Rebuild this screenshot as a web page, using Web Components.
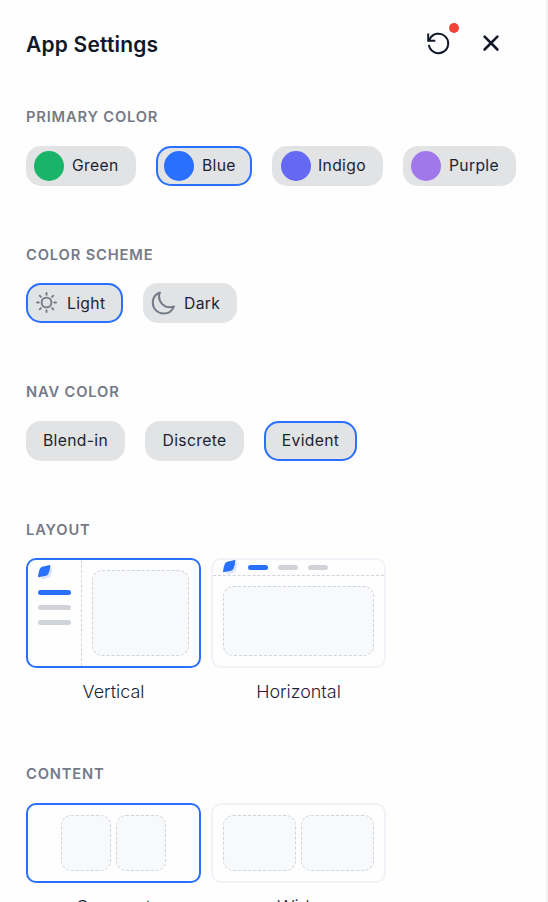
<!DOCTYPE html>
<html lang="en">
<head>
<meta charset="utf-8">
<title>App Settings</title>
<style>
html,body{margin:0;height:902px;overflow:hidden;background:#fefefe}
body{font-family:Inter,"Liberation Sans",sans-serif;color:#1b2333}
</style>
</head>
<body>
<settings-panel>
  <settings-header slot="header">App Settings</settings-header>
  <settings-section heading="Primary color" style="--h:137px;--hls:.82px">
    <option-pill dot="#19b467" style="--w:110px">Green</option-pill>
    <option-pill dot="#2970ff" selected style="--w:96px">Blue</option-pill>
    <option-pill dot="#6468f3" style="--w:111px;--nudge:1px;--gap-i:7px">Indigo</option-pill>
    <option-pill dot="#a078ec" style="--w:113px">Purple</option-pill>
  </settings-section>
  <settings-section heading="Color scheme" style="--h:138px;--top:1px;--lift:2px">
    <option-pill icon="sun" selected style="--w:97px">Light</option-pill>
    <option-pill icon="moon" style="--w:94px">Dark</option-pill>
  </settings-section>
  <settings-section heading="Nav color" style="--h:137px">
    <option-pill style="--w:99px">Blend-in</option-pill>
    <option-pill style="--w:99px">Discrete</option-pill>
    <option-pill selected style="--w:93px">Evident</option-pill>
  </settings-section>
  <settings-section heading="Layout" style="--h:245px;--gap:10px;--top:1px">
    <layout-card kind="vertical" selected>Vertical</layout-card>
    <layout-card kind="horizontal">Horizontal</layout-card>
  </settings-section>
  <settings-section heading="Content" style="--h:160px;--gap:10px">
    <layout-card kind="compact" selected>Compact</layout-card>
    <layout-card kind="wide">Wide</layout-card>
  </settings-section>
</settings-panel>
<script>
class Base extends HTMLElement {
  connectedCallback() {
    if (!this.shadowRoot) this.attachShadow({ mode: 'open' }).innerHTML = this.render();
  }
}

customElements.define('settings-panel', class extends Base {
  render() {
    return `<style>
      :host{display:block;box-sizing:border-box;height:902px;overflow:hidden;padding:0 0 0 26px;border-right:2px solid #f2f2f2}
    </style><slot name="header"></slot><slot></slot>`;
  }
});

customElements.define('settings-header', class extends Base {
  render() {
    return `<style>
      :host{display:flex;align-items:center;height:107px;box-sizing:border-box;padding:0 43px 21px 0}
      h1{margin:3px auto 0 0;font-size:21px;line-height:28px;font-weight:600;letter-spacing:.19px;color:#101828}
      .actions{display:flex;gap:29px}
      .reset{position:relative;display:flex}
      .reset i{position:absolute;left:23px;top:-8px;width:10px;height:10px;border-radius:50%;background:#f04438}
      svg{display:block;fill:none;stroke:#101828}
      .x{stroke-linecap:round}
    </style>
    <h1><slot></slot></h1>
    <div class="actions">
      <span class="reset"><svg width="24" height="24" viewBox="0 0 24 24" stroke-width="2"><path d="M2.9 13.8A9.7 9.7 0 1 0 3.7 8.3L2.6 9.6M2.2 2.5V9.8H9.3"/></svg><i></i></span>
      <svg class="x" width="24" height="24" viewBox="0 0 24 24" stroke-width="2.6"><path d="M5.6 5.7L18.4 18.5M18.4 5.7L5.6 18.5"/></svg>
    </div>`;
  }
});

customElements.define('settings-section', class extends Base {
  render() {
    return `<style>
      :host{display:block;height:var(--h)}
      h2{margin:0;padding-top:var(--top,0px);height:39px;box-sizing:border-box;font-size:14.7px;line-height:20px;font-weight:600;letter-spacing:var(--hls,.85px);text-transform:uppercase;color:#747a87}
      .row{display:flex;gap:var(--gap,20px)}
    </style><h2>${this.getAttribute('heading')}</h2><div class="row"><slot></slot></div>`;
  }
});

const ICONS = {
  sun: `<svg style="margin:0 10px 0 10px" width="21" height="22" viewBox="0 0 21 22" stroke-width="1.9"><circle cx="10.5" cy="10.5" r="4.9"/><path d="M10.5 1V2.8M10.5 18.2V20M1 10.5H2.8M18.2 10.5H20M3.7 3.7L4.9 4.9M16.1 16.1L17.3 17.3M3.7 17.3L4.9 16.1M16.1 4.9L17.3 3.7"/></svg>`,
  moon: `<svg style="margin:0 8px 0 8px" width="25" height="26" viewBox="0 0 25 26" stroke-width="2"><path d="M9 2.5C4.7 4.1 1.8 8.1 1.8 12.7C1.8 18.7 6.6 23.6 12.6 23.6C17.2 23.6 21.3 20.8 23 16.5C21.7 17 20.4 17.3 19 17.3C12.9 17.3 8 12.4 8 6.3C8 5 8.3 3.7 9 2.5Z"/></svg>`
};

customElements.define('option-pill', class extends Base {
  render() {
    const dot = this.getAttribute('dot');
    const icon = this.getAttribute('icon');
    const lead = dot ? `<i style="background:${dot}"></i>` : (ICONS[icon] || '');
    return `<style>
      :host{display:flex;align-items:center;box-sizing:border-box;width:var(--w);height:40px;border-radius:15px;background:#e1e3e5;flex:none;${lead ? '' : 'justify-content:center;'}}
      :host([selected]){box-shadow:inset 0 0 0 2px #2970ff}
      i{width:30px;height:30px;border-radius:50%;margin:0 var(--gap-i,8px) 0 calc(8px + var(--nudge,0px))}
      svg{display:block;fill:none;stroke:#747a87;stroke-linecap:round;stroke-linejoin:round}
      span{font-size:15.7px;line-height:22px;letter-spacing:.33px;margin-top:var(--lift,0px);white-space:nowrap}
    </style>${lead}<span><slot></slot></span>`;
  }
});

const LOGO = `<svg class="logo" width="15" height="15" viewBox="0 0 15 15"><path d="M5.5 3.2L14.6 2.6Q14.4 8 11.8 12.2Q8 14.2 3 14.4Z" fill="#dee6ff"/><path d="M.4 12.2Q0 12.3 0 11.8Q.3 7 2 3.6Q2.7 2.2 4.2 1.7L11.9 .1Q12.4 0 12.4 .6Q12 5.6 10.4 8.8Q9.6 10.3 8 10.8Z" fill="#2970ff"/></svg>`;

customElements.define('layout-card', class extends Base {
  render() {
    const kind = this.getAttribute('kind');
    const bars = '<b class="on"></b><b></b><b></b>';
    const inner = {
      vertical: `<nav>${LOGO}${bars}</nav><div class="area"><p></p></div>`,
      horizontal: `<nav>${LOGO}${bars}</nav><div class="area"><p></p></div>`,
      compact: '<div class="area"><p></p><p></p></div>',
      wide: '<div class="area"><p></p><p></p></div>'
    }[kind];
    return `<style>
      :host{display:block;width:175px;flex:none;text-align:center}
      .frame{display:flex;box-sizing:border-box;width:175px;height:110px;border:2px solid #f2f3f9;border-radius:10px;overflow:hidden}
      :host([selected]) .frame{border-color:#2970ff}
      .frame.compact,.frame.wide{height:80px}
      .horizontal{flex-direction:column}
      nav{display:flex;box-sizing:border-box;flex:none}
      .vertical nav{flex-direction:column;width:54px;padding:5px 10px;gap:10px;border-right:1px dashed #d0d4d9}
      .horizontal nav{height:16px;padding:0 10px;gap:10px;align-items:center;border-bottom:1px dashed #d0d4d9}
      .logo{display:block;flex:none}
      b{display:block;flex:none;width:33px;height:5px;border-radius:2.5px;background:#d0d4d9}
      .horizontal b{width:20px}
      b.on{background:#2970ff}
      .area{display:flex;flex:1;gap:5px;padding:10px}
      .compact .area{padding:10px 33px}
      p{flex:1;margin:0;border:1px dashed #d0d4d9;border-radius:10px;background:#f8f9fb}
      .label{display:block;margin-top:12px;font-size:17.9px;line-height:24px;font-weight:300}
    </style><div class="frame ${kind}">${inner}</div><span class="label"><slot></slot></span>`;
  }
});
</script>
</body>
</html>
